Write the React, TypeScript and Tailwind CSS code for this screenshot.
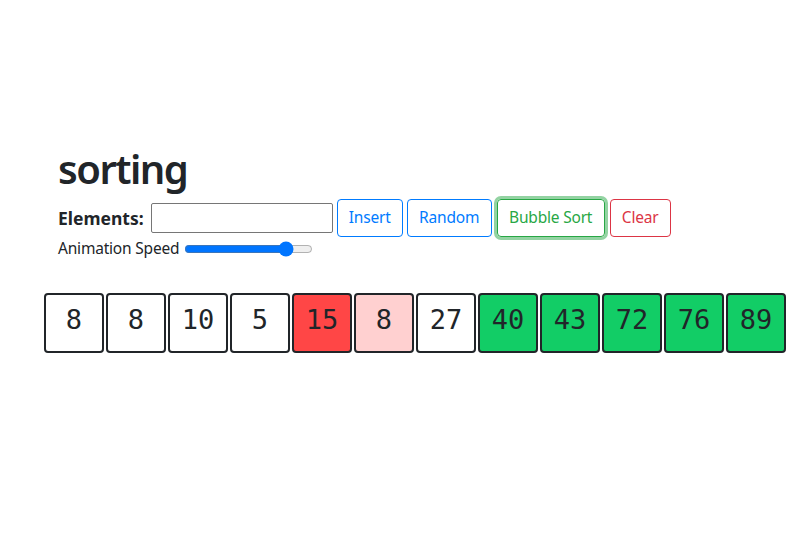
import React from "react";

type Cell = { v: number; s: "idle" | "cur" | "cmp" | "done" };

const cells: Cell[] = [
  { v: 8, s: "idle" },
  { v: 8, s: "idle" },
  { v: 10, s: "idle" },
  { v: 5, s: "idle" },
  { v: 15, s: "cur" },
  { v: 8, s: "cmp" },
  { v: 27, s: "idle" },
  { v: 40, s: "done" },
  { v: 43, s: "done" },
  { v: 72, s: "done" },
  { v: 76, s: "done" },
  { v: 89, s: "done" },
];

const cellBg: Record<Cell["s"], string> = {
  idle: "bg-white",
  cur: "bg-[#ff4646]",
  cmp: "bg-[#ffd0d0]",
  done: "bg-[#12cd66]",
};

export default function App() {
  return (
    <div
      className="min-h-[555px] bg-white text-[#212529]"
      style={{ fontFamily: '"Noto Sans", "Open Sans", sans-serif' }}
    >
      <div className="mx-auto w-[720px] px-[15px] pt-[145px]">
        <h1 className="text-[40px] font-semibold leading-[48px] tracking-[-1.5px] mb-[6px]">sorting</h1>

        <div className="flex items-center gap-[4px]">
          <label className="font-bold text-[17.5px] mr-[3px] tracking-[0px]">Elements:</label>
          <input
            type="text"
            className="w-[182px] h-[30px] border border-[#767676] rounded-[2px] px-1 text-[15px] outline-none"
          />
          <button className="w-[66px] h-[38px] rounded-[4px] border border-[#007bff] text-[#007bff] text-[15.5px] tracking-[-0.2px]">
            Insert
          </button>
          <button className="w-[85px] h-[38px] rounded-[4px] border border-[#007bff] text-[#007bff] text-[15.5px] tracking-[-0.2px]">
            Random
          </button>
          <button className="ml-[1px] w-[108px] h-[38px] rounded-[4px] border border-[#28a745] text-[#28a745] text-[15.5px] tracking-[-0.2px] shadow-[0_0_0_3px_rgba(40,167,69,0.5)]">
            Bubble Sort
          </button>
          <button className="ml-[1px] w-[61px] h-[38px] rounded-[4px] border border-[#dc3545] text-[#dc3545] text-[15.5px] tracking-[-0.2px]">
            Clear
          </button>
        </div>

        <div className="flex items-center mt-[1px] h-[22px]">
          <span className="text-[15.5px] tracking-[-0.2px]">Animation Speed</span>
          <input
            type="range"
            min={0}
            max={100}
            defaultValue={83}
            className="ml-[5px] w-[129px] accent-[#0075ff]"
          />
        </div>

        <div className="-mx-[15px] flex mt-[32px]">
          {cells.map((c, i) => (
            <div
              key={i}
              className={`flex-none w-[60px] h-[60px] m-[1px] border-2 border-[#212529] rounded-[4px] flex items-center justify-center pb-[6px] text-[27px] ${cellBg[c.s]}`}
              style={{ fontFamily: '"DejaVu Sans Mono", "Liberation Mono", monospace' }}
            >
              {c.v}
            </div>
          ))}
        </div>
      </div>
    </div>
  );
}
